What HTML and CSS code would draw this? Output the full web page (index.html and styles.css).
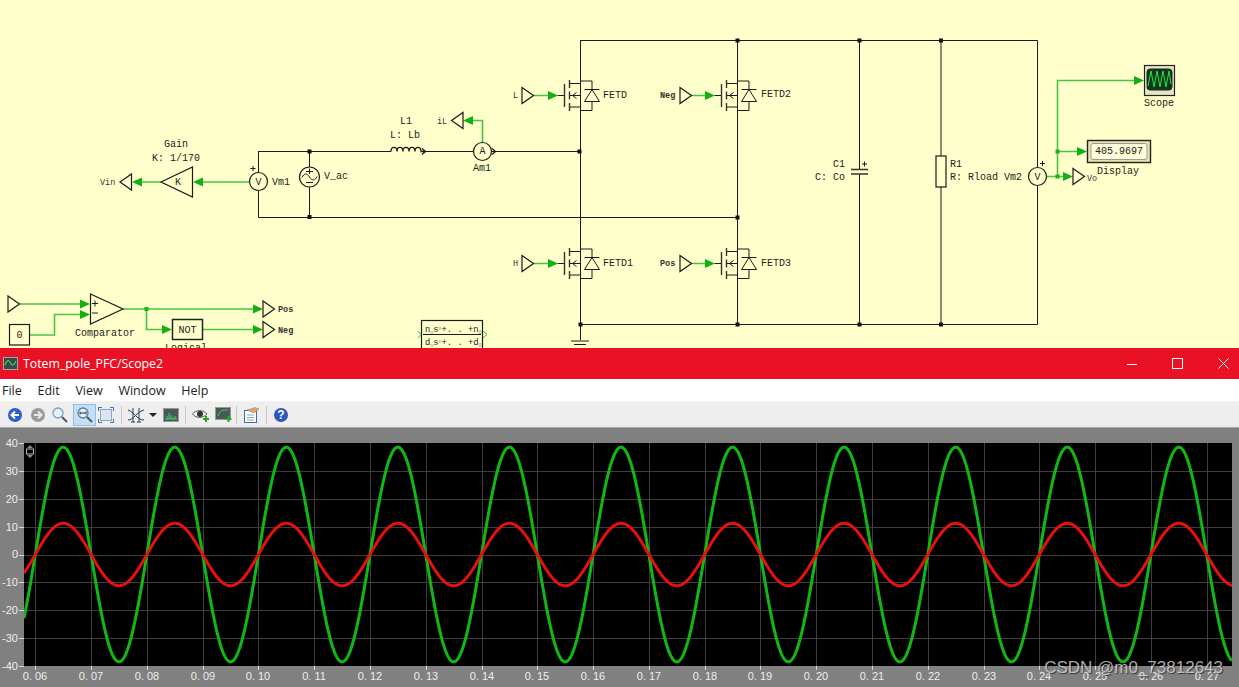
FILE: index.html
```html
<!DOCTYPE html>
<html lang="en">
<head>
<meta charset="utf-8">
<title>Totem_pole_PFC/Scope2</title>
<link rel="stylesheet" href="styles.css">
</head>
<body>
<main class="page">
  <section class="schematic">
    <svg class="schematic-svg" width="1239" height="348" viewBox="0 0 1239 348">
      <defs>
        <g id="fet">
          <path class="wire" d="M-23 0.5H-16M-11 -11.5H0M-11 12H0M-11 0.5H0M0 -14H11.5V-5.5M0 15.5H11.5V6.5M4 -5.5H19M11.5 -5.5L4 6.5H19Z"/>
          <path class="wire-thick" d="M-16 -11V12"/>
          <path class="wire-thick" d="M-11 -15V-7M-11 -3.5V4.5M-11 8V16"/>
          <path class="wire" d="M-4 -2.5L-8 0.5L-4 3.5"/>
        </g>
        <path id="arrow" class="arrow" d="M0 -4.5L10 0L0 4.5Z"/>
        <path id="port-r" class="block" d="M0 -8L11.5 0L0 8Z"/>
        <path id="port-l" class="block" d="M0 0L11.5 -8V8Z"/>
      </defs>

      <!-- power wiring -->
      <path class="wire" d="M580 40.5H1037.5V167M1037.5 186V324.5H580M580.5 40V340M737.5 40V324M859.5 40V169M859.5 174V324M941 40V156M941 187V324"/>
      <path class="wire" d="M258.5 151.5H391M425 151.5H473M491 151.5H580M258.5 151V172M258.5 191V217.5H737M309.5 151V167M309.5 187V217"/>
      <path class="wire" d="M571 341H589M574 344.5H586"/>
      <g class="dots">
        <rect x="735.500" y="38.500" width="4" height="4"/><rect x="857.500" y="38.500" width="4" height="4"/>
        <rect x="939" y="38.500" width="4" height="4"/><rect x="577.500" y="149.500" width="4" height="4"/>
        <rect x="735.500" y="215.500" width="4" height="4"/>
        <rect x="578.500" y="322.500" width="4" height="4"/><rect x="735.500" y="322.500" width="4" height="4"/>
        <rect x="857.500" y="322.500" width="4" height="4"/><rect x="939" y="322.500" width="4" height="4"/>
        <rect x="307.500" y="149.500" width="4" height="4"/><rect x="307.500" y="215" width="4" height="4"/>
      </g>

      <!-- switches -->
      <use href="#fet" x="580.500" y="95"/>
      <use href="#fet" x="737.500" y="95"/>
      <use href="#fet" x="580.500" y="263"/>
      <use href="#fet" x="737.500" y="263"/>

      <!-- control wiring -->
      <path class="signal" d="M533 95.500H550M691 95.500H707M533 263.500H550M691 263.500H707M249 182H200M161 182H140M482.500 142V120.500H470M1046 176.500H1066M1057.500 176.500V80.500H1137M1057.500 151.500H1080M19 304H84M30 335H54.500V314.500H84M123 309H256M146.500 309V329.500H165M202 329.500H256"/>
      <g class="dots-green">
        <rect x="1055.500" y="174.500" width="4" height="4"/><rect x="1055.500" y="149.500" width="4" height="4"/><rect x="144.500" y="307" width="4" height="4"/>
      </g>
      <use href="#arrow" x="548" y="95.500"/><use href="#arrow" x="705" y="95.500"/>
      <use href="#arrow" x="548" y="263.500"/><use href="#arrow" x="705" y="263.500"/>
      <use href="#arrow" x="1134" y="80.500"/><use href="#arrow" x="1077" y="151.500"/>
      <use href="#arrow" x="1063" y="176.500"/><use href="#arrow" x="80" y="304"/>
      <use href="#arrow" x="80" y="314.500"/><use href="#arrow" x="253" y="309"/>
      <use href="#arrow" x="253" y="329.500"/><use href="#arrow" x="162" y="329.500"/>
      <path class="arrow" d="M193 182L203 177.500V186.500ZM132 182L142 177.500V186.500ZM463 120.500L473 116V125Z"/>

      <!-- ports -->
      <use href="#port-r" x="522" y="95.500"/><use href="#port-r" x="680" y="95.500"/>
      <use href="#port-r" x="522" y="263.500"/><use href="#port-r" x="680" y="263.500"/>
      <use href="#port-r" x="263" y="309"/><use href="#port-r" x="263" y="329.500"/>
      <use href="#port-r" x="8" y="304"/><use href="#port-r" x="1073" y="176.500"/>
      <use href="#port-l" x="120" y="182"/><use href="#port-l" x="451.500" y="120.500"/>

      <!-- meters and sources -->
      <circle class="block" cx="258.500" cy="181.500" r="9"/>
      <circle class="block" cx="482.500" cy="151.500" r="9"/>
      <circle class="block" cx="1037.500" cy="176.500" r="9"/>
      <circle class="block" cx="309.500" cy="177" r="10"/>
      <path class="wire" d="M302 177.500C304 173 307 173 309.500 177C312 181 315 181 317 176.500M306 171.500H313M309.500 168.500V174M306 182.500H313"/>
      <path class="coil" d="M391 151.500C391 146 397 146 397 151.500M397 151.500C397 146 403 146 403 151.500M403 151.500C403 146 409 146 409 151.500M409 151.500C409 146 415 146 415 151.500M415 151.500C415 146 421 146 421 151.500H425M422 148.500L425.500 151.500L422 154.500M492 148.500L495.500 151.500L492 154.500"/>
      <path class="wire" d="M250.500 168.500H255.500M253 166V171M1040 163.500H1045M1042.500 161V166"/>

      <!-- passives -->
      <path class="wire-thick" d="M851 169.500H868M851 174H868"/>
      <path class="wire" d="M862 164H867M864.500 161.500V166.500"/>
      <rect class="block" x="936" y="156" width="10" height="31"/>

      <!-- blocks -->
      <path class="block" d="M161 182L192.500 167V197Z"/>
      <path class="block" d="M90.500 294L123 309L90.500 324Z"/>
      <path class="wire" d="M92 303.500H98M95 300.500V306.500M92 313H98"/>
      <rect class="block" x="9.500" y="324.500" width="20" height="20.500"/>
      <rect class="block-thick" x="172.500" y="319.500" width="30" height="20"/>

      <g class="display">
        <rect class="display-frame" x="1087.500" y="140.500" width="63" height="22"/>
        <rect class="display-face" x="1091" y="143.500" width="56" height="16" rx="2"/>
      </g>
      <rect class="scope-frame" x="1144.500" y="65.500" width="30" height="30"/>
      <rect class="scope-face" x="1147" y="69" width="25" height="21" rx="3"/>
      <path class="scope-wave" d="M1148 86L1151 71L1154 87L1157 71L1160 87L1163 71L1166 87L1169 71L1171 84"/>

      <!-- transfer function -->
      <rect class="block" x="421.500" y="320.500" width="61" height="34"/>
      <path class="wire" d="M423 334.500H481"/>
      <path class="chev" d="M418 331L421 334.500L418 338M483 331L487 334.500L483 338"/>
      <text class="lbl tf" x="425" y="332">n<tspan class="sub" dy="2">n</tspan><tspan dy="-2">s</tspan><tspan class="sub" dy="-2">n</tspan><tspan dy="2">+. . +n</tspan><tspan class="sub" dy="2">0</tspan></text>
      <text class="lbl tf" x="425" y="345">d<tspan class="sub" dy="2">n</tspan><tspan dy="-2">s</tspan><tspan class="sub" dy="-2">n</tspan><tspan dy="2">+. . +d</tspan><tspan class="sub" dy="2">0</tspan></text>

      <!-- labels -->
      <text class="lbl" x="164" y="147">Gain</text>
      <text class="lbl" x="152" y="161">K: 1/170</text>
      <text class="lbl" x="178" y="185" text-anchor="middle">K</text>
      <text class="lbl small" x="100" y="185">Vin</text>
      <text class="lbl" x="258.500" y="185" text-anchor="middle">V</text>
      <text class="lbl" x="272" y="185">Vm1</text>
      <text class="lbl" x="324" y="179">V_ac</text>
      <text class="lbl" x="400" y="124">L1</text>
      <text class="lbl" x="390" y="138">L: Lb</text>
      <text class="lbl" x="482.500" y="154" text-anchor="middle">A</text>
      <text class="lbl small" x="437" y="124">iL</text>
      <text class="lbl" x="473" y="171">Am1</text>
      <text class="lbl small" x="513" y="98">L</text>
      <text class="lbl" x="603" y="98">FETD</text>
      <text class="lbl small strong" x="660" y="98">Neg</text>
      <text class="lbl" x="761" y="97">FETD2</text>
      <text class="lbl small" x="513" y="266">H</text>
      <text class="lbl" x="603" y="266">FETD1</text>
      <text class="lbl small strong" x="660" y="266">Pos</text>
      <text class="lbl" x="761" y="266">FETD3</text>
      <text class="lbl" x="833" y="167">C1</text>
      <text class="lbl" x="815" y="180">C: Co</text>
      <text class="lbl" x="950" y="167">R1</text>
      <text class="lbl" x="950" y="180">R: Rload</text>
      <text class="lbl" x="1004" y="180">Vm2</text>
      <text class="lbl" x="1037.500" y="180" text-anchor="middle">V</text>
      <text class="lbl small" x="1087" y="181">Vo</text>
      <text class="lbl" x="1095" y="154">405.9697</text>
      <text class="lbl" x="1097" y="174">Display</text>
      <text class="lbl" x="1144" y="106">Scope</text>
      <text class="lbl small strong" x="278" y="312">Pos</text>
      <text class="lbl small strong" x="278" y="333">Neg</text>
      <text class="lbl" x="75" y="336">Comparator</text>
      <text class="lbl" x="187.500" y="333" text-anchor="middle">NOT</text>
      <text class="lbl" x="19.500" y="338" text-anchor="middle">0</text>
      <text class="lbl" x="165" y="351">Logical</text>
    </svg>
  </section>

  <section class="window">
    <header class="titlebar">
      <svg class="app-icon" width="15" height="13" viewBox="0 0 15 13">
        <rect x="0.500" y="0.500" width="14" height="12" fill="#3a4a44" stroke="#9aa"/>
        <path d="M2 8C4 2 6 3 7.500 6S11 9 13 4" fill="none" stroke="#35d26b" stroke-width="1.200"/>
      </svg>
      <span class="title-text">Totem_pole_PFC/Scope2</span>
      <div class="window-controls">
        <svg width="10" height="10" viewBox="0 0 10 10"><path d="M0 5.500H10" stroke="#fff"/></svg>
        <svg width="11" height="11" viewBox="0 0 11 11"><rect x="0.500" y="0.500" width="10" height="10" fill="none" stroke="#fff"/></svg>
        <svg width="11" height="11" viewBox="0 0 11 11"><path d="M0.500 0.500L10.500 10.500M10.500 0.500L0.500 10.500" stroke="#fff"/></svg>
      </div>
    </header>
    <nav class="menubar">
      <span class="menu-item">File</span>
      <span class="menu-item">Edit</span>
      <span class="menu-item">View</span>
      <span class="menu-item">Window</span>
      <span class="menu-item">Help</span>
    </nav>
    <div class="toolbar">
      <svg class="tool gap-7" width="16" height="16" viewBox="0 0 16 16">
        <circle cx="8" cy="8" r="7" fill="#2c5fc8"/><path d="M12 8H5M8 4.500L4.500 8L8 11.500" fill="none" stroke="#fff" stroke-width="2"/>
      </svg>
      <svg class="tool gap-5" width="16" height="16" viewBox="0 0 16 16">
        <circle cx="8" cy="8" r="7" fill="#9a9a9a"/><path d="M4 8H11M8 4.500L11.500 8L8 11.500" fill="none" stroke="#e8e8e8" stroke-width="2"/>
      </svg>
      <svg class="tool gap-4" width="18" height="18" viewBox="0 0 18 18">
        <circle cx="7" cy="7" r="5" fill="#e4f0fb" stroke="#7f9fc4" stroke-width="1.300"/><path d="M11 11L16 16" stroke="#555" stroke-width="2"/>
      </svg>
      <span class="tool-active">
        <svg width="18" height="18" viewBox="0 0 18 18">
          <circle cx="7" cy="7" r="5" fill="#e4f0fb" stroke="#5f7fa4" stroke-width="1.300"/><path d="M11 11L16 16" stroke="#555" stroke-width="2"/><path d="M4 7H10M4 5.500V8.500M10 5.500V8.500" stroke="#334" fill="none"/>
        </svg>
      </span>
      <svg class="tool gap-7" width="16" height="16" viewBox="0 0 16 16">
        <rect x="2.500" y="2.500" width="11" height="11" fill="#d8e6f5" stroke="#8ea4bd"/><path d="M0.500 4V0.500H4M12 0.500H15.500V4M15.500 12V15.500H12M4 15.500H0.500V12" fill="none" stroke="#2f6fc4"/>
      </svg>
      <span class="sep"></span>
      <svg class="tool gap-5" width="16" height="16" viewBox="0 0 16 16">
        <path d="M0 3C3 4 5 6 8 9S13 13 16 13M0 13C3 13 5 11 8 8S13 4 16 3M5 1V15M11 1V15M3 15H7M9 15H13" fill="none" stroke="#2c3e50" stroke-width="1"/>
      </svg>
      <svg class="tool-caret" width="8" height="4" viewBox="0 0 8 4"><path d="M0 0H8L4 4Z" fill="#222"/></svg>
      <svg class="tool gap-6" width="16" height="14" viewBox="0 0 16 14">
        <rect x="0.500" y="0.500" width="15" height="13" fill="#4a5a52" stroke="#999"/><path d="M2 11H14M4 11V8M6 11V5M8 11V7M10 11V9M12 11V8" stroke="#37d26b"/>
      </svg>
      <span class="sep"></span>
      <svg class="tool gap-5" width="18" height="16" viewBox="0 0 18 16">
        <path d="M0.500 7C4 2.500 11 2.500 15 7C11 11.500 4 11.500 0.500 7Z" fill="#f4f4f4" stroke="#555"/><circle cx="8" cy="7" r="3" fill="#333"/><path d="M14 9V15M11 12H17" stroke="#26a626" stroke-width="2"/>
      </svg>
      <svg class="tool gap-3" width="18" height="16" viewBox="0 0 18 16">
        <rect x="0.500" y="0.500" width="15" height="12" fill="#4a5a52" stroke="#999"/><path d="M3 9C5 3 8 3 13 3" fill="none" stroke="#37d26b"/><path d="M13.500 9V15M10.500 12H16.500" stroke="#26a626" stroke-width="2"/>
      </svg>
      <span class="sep"></span>
      <svg class="tool gap-6" width="17" height="16" viewBox="0 0 17 16">
        <rect x="1.500" y="3.500" width="12" height="12" fill="#fff" stroke="#3a6ea8"/><path d="M4 8H11M4 10.500H11M4 13H11" stroke="#8aa"/><path d="M4 3L12 0.500L16 2L11 6Z" fill="#d8a878" stroke="#a87848" stroke-width="0.500"/>
      </svg>
      <span class="sep"></span>
      <svg class="tool" width="16" height="16" viewBox="0 0 16 16">
        <circle cx="8" cy="8" r="7" fill="#2f55c0"/><text class="help-q" x="8" y="12" text-anchor="middle">?</text>
      </svg>
    </div>
    <div class="scope">
      <svg id="plot" class="plot" width="1239" height="259" viewBox="0 0 1239 259">
        <defs><clipPath id="plot-clip"><rect x="24" y="15" width="1208" height="223"/></clipPath></defs>
        <rect class="plot-bg" x="24" y="15" width="1208" height="223"/>
        <g id="grid"></g>
        <g id="traces" clip-path="url(#plot-clip)"></g>
        <path class="zoom-handle" d="M30 17L33 20H27ZM30 30L33 27H27Z"/>
        <rect class="zoom-box" x="26.500" y="21" width="7" height="5"/>
        <g class="ylabels">
          <text x="18" y="19">40</text><text x="18" y="47">30</text><text x="18" y="75">20</text>
          <text x="18" y="103">10</text><text x="18" y="130">0</text><text x="18" y="158">-10</text>
          <text x="18" y="186">-20</text><text x="18" y="214">-30</text><text x="18" y="242">-40</text>
        </g>
        <g class="xlabels">
          <text x="35" y="252">0. 06</text><text x="91" y="252">0. 07</text><text x="147" y="252">0. 08</text>
          <text x="203" y="252">0. 09</text><text x="258" y="252">0. 10</text><text x="314" y="252">0. 11</text>
          <text x="370" y="252">0. 12</text><text x="426" y="252">0. 13</text><text x="482" y="252">0. 14</text>
          <text x="537" y="252">0. 15</text><text x="593" y="252">0. 16</text><text x="649" y="252">0. 17</text>
          <text x="705" y="252">0. 18</text><text x="760" y="252">0. 19</text><text x="816" y="252">0. 20</text>
          <text x="872" y="252">0. 21</text><text x="928" y="252">0. 22</text><text x="984" y="252">0. 23</text>
          <text x="1039" y="252">0. 24</text><text x="1095" y="252">0. 25</text><text x="1151" y="252">0. 26</text>
          <text x="1207" y="252">0. 27</text>
        </g>
      </svg>
      <div class="watermark">CSDN @m0_73812643</div>
    </div>
  </section>
</main>
<script src="script.js"></script>
</body>
</html>
```
FILE: styles.css
```css
* { box-sizing: border-box; }
html, body { margin: 0; padding: 0; overflow: hidden; }
body { background: #808080; }
.page { width: 1239px; height: 687px; display: flex; flex-direction: column; }

.schematic { height: 348px; background: #ffffcc; overflow: hidden; flex: none; }
.schematic-svg { display: block; }
.wire { fill: none; stroke: #1a1a1a; stroke-width: 1; }
.coil { fill: none; stroke: #1a1a1a; stroke-width: 1.3; }
.wire-thick { fill: none; stroke: #333; stroke-width: 1.4; }
.block { fill: none; stroke: #1a1a1a; stroke-width: 1.2; }
.block-thick { fill: none; stroke: #222; stroke-width: 1.5; }
.signal { fill: none; stroke: #45c545; stroke-width: 1.6; }
.arrow { fill: #12b012; stroke: none; }
.chev { fill: none; stroke: #35b835; stroke-width: 1; }
.dots { fill: #111; }
.dots-green { fill: #20b020; }
.display-frame { fill: #e4e4b4; stroke: #222; stroke-width: 1.4; }
.display-face { fill: #fdfdd8; stroke: #999; }
.scope-frame { fill: #e8e8c0; stroke: #222; stroke-width: 1.2; }
.scope-face { fill: #0a3a1a; stroke: #222; }
.scope-wave { fill: none; stroke: #2ee04a; stroke-width: 1; }
.lbl { font-family: "Liberation Mono", monospace; font-size: 10px; fill: #222; }
.lbl.small { font-size: 8.5px; fill: #333; }
.lbl.strong { font-weight: 700; }
.lbl.tf { font-size: 8.8px; }
.lbl .sub { font-size: 5px; fill: #888; }

.window { flex: 1; display: flex; flex-direction: column; min-height: 0; }
.titlebar { height: 31px; flex: none; background: #e81224; display: flex; align-items: center; padding-left: 3px; color: #fff; }
.app-icon { flex: none; display: block; }
.title-text { margin-left: 5px; font-family: "Open Sans", sans-serif; font-size: 12.300px; color: #fff; }
.window-controls { margin-left: auto; display: flex; align-items: center; gap: 35px; padding-right: 10px; }
.window-controls svg { display: block; }

.menubar { height: 23px; flex: none; background: #fff; display: flex; align-items: center; padding-left: 2px; font-family: "Open Sans", sans-serif; font-size: 12.500px; color: #222; border-bottom: 1px solid #f4f4f4; }
.menu-item { margin-right: 15.700px; }

.toolbar { height: 26px; flex: none; background: #eeeeee; display: flex; align-items: center; padding-left: 7px; border-bottom: 1px solid #a8a8a8; }
.toolbar svg { display: block; flex: none; }
.gap-3 { margin-right: 3px; }
.gap-4 { margin-right: 4px; }
.gap-5 { margin-right: 5px; }
.gap-6 { margin-right: 6px; }
.gap-7 { margin-right: 7px; }
.tool-active { width: 23px; height: 22px; margin-right: 2px; background: #c4def5; border: 1px solid #93bde2; display: flex; align-items: center; justify-content: center; flex: none; }
.tool-caret { margin-right: 6px; }
.sep { width: 1px; height: 18px; background: #c8c8c8; margin-right: 6px; flex: none; }
.help-q { font-family: "Liberation Sans", sans-serif; font-size: 12px; font-weight: 700; fill: #fff; }

.scope { position: relative; flex: 1; background: #808080; min-height: 0; overflow: hidden; }
.plot { display: block; }
.plot-bg { fill: #000; }
.grid-line { stroke: #3e3e3e; stroke-width: 1; }
.tick { stroke: #d8d8d8; stroke-width: 1; }
.trace { fill: none; stroke-width: 3; stroke-linejoin: round; }
.trace-green { stroke: #12b812; }
.trace-red { stroke: #e80f0f; }
.zoom-handle { fill: #888; }
.zoom-box { fill: none; stroke: #bbb; }
.ylabels text { font-family: "Liberation Sans", sans-serif; font-size: 11px; fill: #eee; text-anchor: end; }
.xlabels text { font-family: "Liberation Sans", sans-serif; font-size: 11px; fill: #eee; text-anchor: middle; }
.watermark { position: absolute; right: 16px; bottom: 10px; font-family: "Liberation Sans", sans-serif; font-size: 17px; line-height: 18px; color: rgba(225, 225, 225, 0.75); text-shadow: 1px 1px 1px rgba(0, 0, 0, 0.6); white-space: nowrap; }
```
FILE: script.js
```js
(function () {
  var NS = "http://www.w3.org/2000/svg";
  var grid = document.getElementById("grid");
  var traces = document.getElementById("traces");
  var top = 15, bottom = 238, left = 24, right = 1232;

  function xOf(t) { return 35.3 + (t - 0.06) * 5578; }
  function yOf(v) { return top + (40 - v) * (bottom - top) / 80; }

  function line(cls, x1, y1, x2, y2) {
    var l = document.createElementNS(NS, "line");
    l.setAttribute("class", cls);
    l.setAttribute("x1", x1); l.setAttribute("y1", y1);
    l.setAttribute("x2", x2); l.setAttribute("y2", y2);
    grid.appendChild(l);
  }

  for (var i = 6; i <= 27; i++) {
    var x = Math.round(xOf(i / 100)) + 0.5;
    line("grid-line", x, top, x, bottom);
    line("tick", x, bottom, x, bottom + 4);
  }
  for (var v = -40; v <= 40; v += 10) {
    var y = Math.round(yOf(v)) + 0.5;
    if (v > -40 && v < 40) line("grid-line", left, y, right, y);
    line("tick", 19, y, left, y);
  }

  function wave(cls, amp) {
    var pts = [];
    for (var px = left; px <= right; px += 0.5) {
      var t = 0.06 + (px - 35.3) / 5578;
      pts.push(px + "," + yOf(amp * Math.sin(2 * Math.PI * (t - 0.06) / 0.02)).toFixed(2));
    }
    var p = document.createElementNS(NS, "polyline");
    p.setAttribute("class", "trace " + cls);
    p.setAttribute("points", pts.join(" "));
    traces.appendChild(p);
  }
  wave("trace-green", 38.5);
  wave("trace-red", 11.2);
})();
```
